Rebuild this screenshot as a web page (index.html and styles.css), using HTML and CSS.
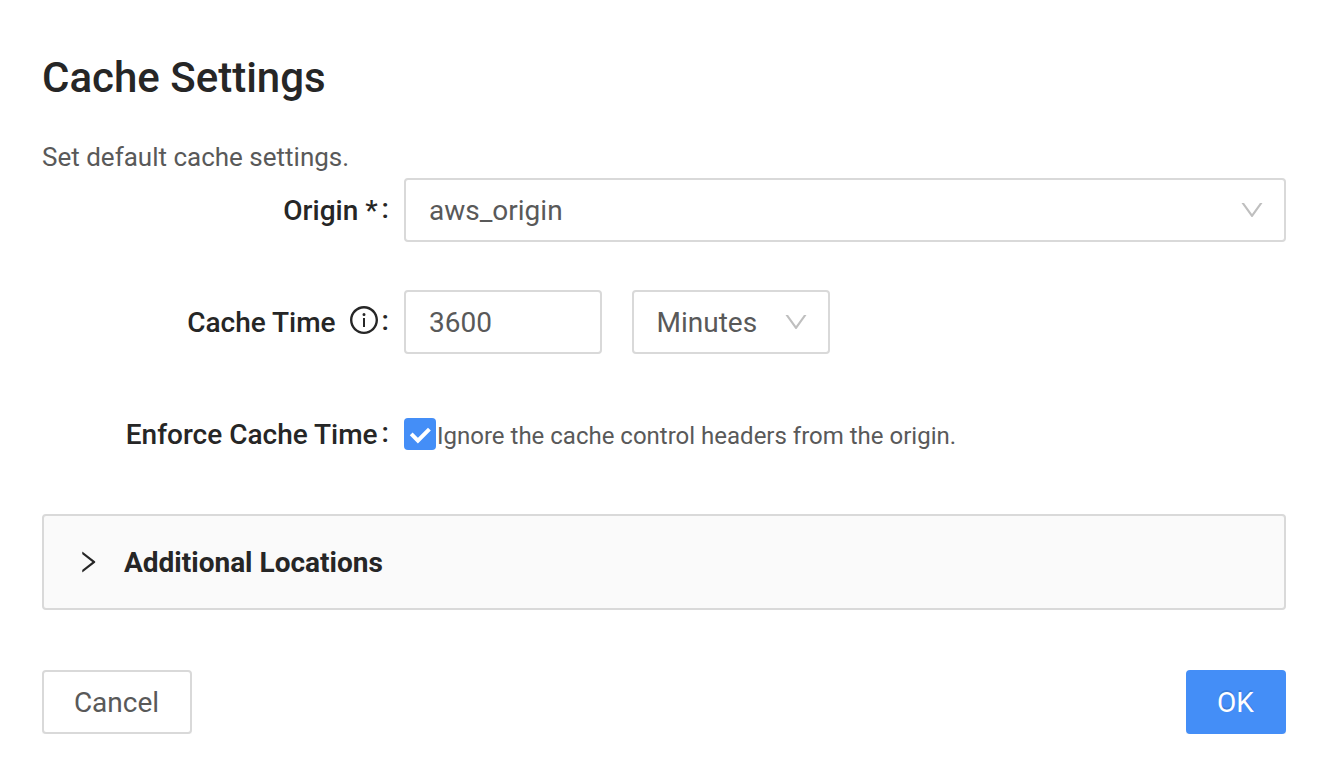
FILE: index.html
```html
<!DOCTYPE html>
<html lang="en">
<head>
<meta charset="utf-8">
<title>Cache Settings</title>
<link rel="stylesheet" href="styles.css">
</head>
<body>
<main class="panel">
  <h1 class="title">Cache Settings</h1>
  <p class="intro">Set default cache settings.</p>
  <form class="form">
    <div class="row">
      <div class="label"><span>Origin *</span><span class="colon">:</span></div>
      <div class="field select select-wide">
        <span>aws_origin</span>
        <svg class="chevron" viewBox="0 0 1024 1024"><path d="M884 256h-75c-5.100 0-9.900 2.500-12.900 6.600L512 654.200 227.900 262.600c-3-4.100-7.800-6.600-12.900-6.600h-75c-6.500 0-10.300 7.400-6.500 12.700l352.600 486.100c12.800 17.600 39 17.600 51.700 0l352.600-486.100c3.900-5.300.1-12.700-6.400-12.700z"/></svg>
      </div>
    </div>
    <div class="row">
      <div class="label"><span>Cache Time</span>
        <svg class="info" viewBox="0 0 1024 1024"><path d="M512 64C264.600 64 64 264.600 64 512s200.600 448 448 448 448-200.600 448-448S759.400 64 512 64zm0 820c-205.400 0-372-166.600-372-372s166.600-372 372-372 372 166.600 372 372-166.600 372-372 372z"/><path d="M464 336a48 48 0 1 0 96 0 48 48 0 1 0-96 0zm72 112h-48c-4.400 0-8 3.600-8 8v272c0 4.400 3.600 8 8 8h48c4.400 0 8-3.600 8-8V456c0-4.400-3.600-8-8-8z"/></svg>
        <span class="colon">:</span></div>
      <div class="field number">3600</div>
      <div class="field select unit">
        <span>Minutes</span>
        <svg class="chevron" viewBox="0 0 1024 1024"><path d="M884 256h-75c-5.100 0-9.900 2.500-12.900 6.600L512 654.200 227.900 262.600c-3-4.100-7.800-6.600-12.900-6.600h-75c-6.500 0-10.300 7.400-6.500 12.700l352.600 486.100c12.800 17.600 39 17.600 51.700 0l352.600-486.100c3.900-5.300.1-12.700-6.400-12.700z"/></svg>
      </div>
    </div>
    <div class="row">
      <div class="label"><span>Enforce Cache Time</span><span class="colon">:</span></div>
      <span class="checkbox"><svg viewBox="0 0 32 32"><path d="M7.200 15.900 13.900 22.600 25.400 11.050"/></svg></span>
      <span class="hint">Ignore the cache control headers from the origin.</span>
    </div>
  </form>
  <section class="collapse">
    <svg class="arrow" viewBox="0 0 1024 1024"><path d="M765.700 486.800L314.900 134.700A7.970 7.970 0 0 0 302 141v77.300c0 4.900 2.300 9.600 6.100 12.600l360 281.100-360 281.100c-3.900 3-6.100 7.700-6.100 12.600V883c0 6.700 7.700 10.400 12.900 6.300l450.800-352.100a31.960 31.960 0 0 0 0-50.400z"/></svg>
    <span class="collapse-title">Additional Locations</span>
  </section>
  <footer class="actions">
    <button class="button cancel" type="button">Cancel</button>
    <button class="button ok" type="button">OK</button>
  </footer>
</main>
</body>
</html>
```
FILE: styles.css
```css
* { box-sizing: border-box; }
body { margin: 0; background: #fff; color: #595959; font-family: Roboto, "Liberation Sans", sans-serif; font-size: 28px; }
.panel { padding: 46px 46px 0 42px; }
.title { margin: 0; height: 64px; line-height: 64px; font-size: 42px; font-weight: 500; color: #262626; white-space: nowrap; }
.intro { margin: 26px 0 0; height: 42px; line-height: 42px; font-size: 26px; white-space: nowrap; }
.form { display: flex; flex-direction: column; gap: 48px; }
.row { display: flex; align-items: center; height: 64px; }
.label { display: flex; align-items: center; justify-content: flex-end; width: 347px; margin-right: 15px; color: #262626; font-weight: 500; white-space: nowrap; }
.colon { margin-left: 4px; padding-bottom: 4px; }
.field { display: flex; align-items: center; height: 64px; padding: 0 18px 0 23px; border: 2px solid #d9d9d9; border-radius: 4px; background: #fff; }
.select { justify-content: space-between; }
.select-wide { flex: 1; }
.number, .unit { width: 198px; }
.unit { margin-left: 30px; padding-left: 22.5px; }
.chevron { width: 28px; height: 28px; fill: #bfbfbf; }
.info { width: 32px; height: 32px; margin: 0 -2px 4px 12px; fill: #262626; }
.checkbox { width: 32px; height: 32px; border-radius: 4px; background: #448ef7; }
.checkbox svg { display: block; fill: none; stroke: #fff; stroke-width: 4; }
.hint { margin-left: 1px; padding-top: 4px; font-size: 24px; white-space: nowrap; }
.collapse { display: flex; align-items: center; height: 96px; margin-top: 48px; padding-left: 30px; border: 2px solid #d9d9d9; border-radius: 4px; background: #fafafa; color: #262626; }
.arrow { width: 28px; height: 28px; margin-right: 22px; fill: #262626; }
.collapse-title { font-weight: 700; white-space: nowrap; }
.actions { display: flex; justify-content: space-between; margin-top: 60px; }
.button { height: 64px; padding: 0 1px 0 0; border: 2px solid #d9d9d9; border-radius: 4px; background: #fff; box-shadow: 0 4px 0 rgba(0, 0, 0, 0.015); color: #595959; font-family: inherit; font-size: 28px; }
.cancel { width: 150px; }
.ok { width: 100px; border-color: #448ef7; background: #448ef7; box-shadow: 0 4px 0 rgba(0, 0, 0, 0.045); color: #fff; text-shadow: 0 -2px 0 rgba(0, 0, 0, 0.12); }
```
